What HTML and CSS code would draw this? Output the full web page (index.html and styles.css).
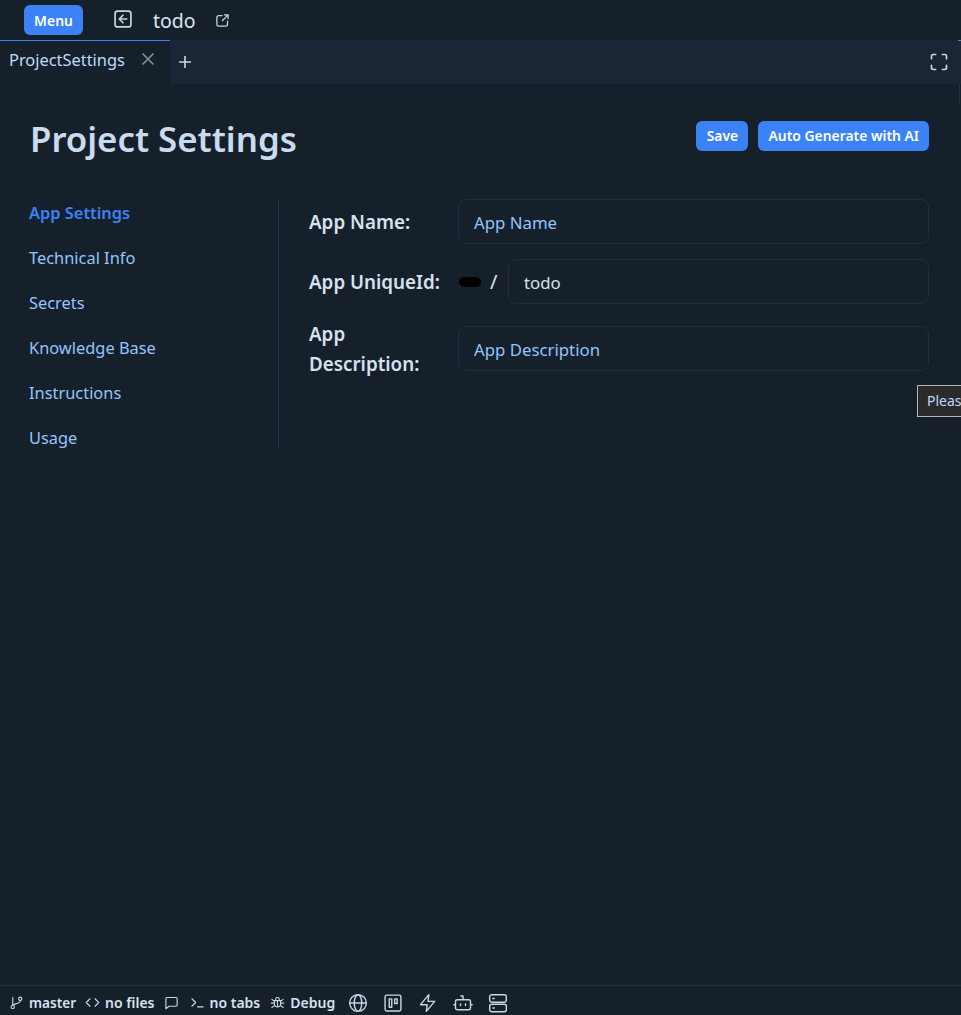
FILE: index.html
```html
<!DOCTYPE html>
<html lang="en">
<head>
    <meta charset="UTF-8">
    <meta name="viewport" content="width=device-width, initial-scale=1.0">
    <title>Project Settings</title>
    <link rel="stylesheet" href="styles.css">
</head>
<body>
    <div class="topbar">
        <button class="btn menu-btn">Menu</button>
        <svg class="icon back-icon" viewBox="0 0 24 24"><rect x="2.5" y="2.5" width="19" height="19" rx="3"/><path d="M12 7.5L7.5 12l4.5 4.5M8 12h8.5"/></svg>
        <span class="project-name">todo</span>
        <svg class="icon open-icon" viewBox="0 0 24 24"><path d="M11 4H6a3 3 0 0 0-3 3v11a3 3 0 0 0 3 3h11a3 3 0 0 0 3-3v-5M12 12l9-9M15 3h6v6"/></svg>
    </div>
    <div class="tabbar">
        <div class="tab">
            <span>ProjectSettings</span>
            <svg class="tab-close" viewBox="0 0 14 14"><path d="M1.5 1.5l11 11M12.5 1.5l-11 11"/></svg>
        </div>
        <svg class="tab-add" viewBox="0 0 14 14"><path d="M7 1v12M1 7h12"/></svg>
        <svg class="icon fullscreen-icon" viewBox="0 0 24 24"><path d="M3 8V5a2 2 0 0 1 2-2h3M16 3h3a2 2 0 0 1 2 2v3M21 16v3a2 2 0 0 1-2 2h-3M8 21H5a2 2 0 0 1-2-2v-3"/></svg>
    </div>
    <main class="content">
        <div class="page-head">
            <h1>Project Settings</h1>
            <div class="actions">
                <button class="btn save-btn">Save</button>
                <button class="btn">Auto Generate with AI</button>
            </div>
        </div>
        <div class="settings">
            <nav class="side-nav">
                <a class="active">App Settings</a>
                <a>Technical Info</a>
                <a>Secrets</a>
                <a>Knowledge Base</a>
                <a>Instructions</a>
                <a>Usage</a>
            </nav>
            <div class="form">
                <div class="form-row">
                    <label>App Name:</label>
                    <input class="field" type="text" placeholder="App Name">
                </div>
                <div class="form-row">
                    <label>App UniqueId:</label>
                    <span class="redacted"></span>
                    <span class="slash">/</span>
                    <input class="field" type="text" value="todo">
                </div>
                <div class="form-row">
                    <label>App Description:</label>
                    <input class="field" type="text" placeholder="App Description">
                </div>
            </div>
        </div>
        <div class="tooltip">Pleas</div>
    </main>
    <div class="statusbar">
        <svg class="icon" viewBox="0 0 24 24"><circle cx="6" cy="19" r="2.6"/><circle cx="18" cy="6" r="2.6"/><path d="M6 16V4M18 9c0 5-8 4-12 7"/></svg>
        <span class="status-text branch">master</span>
        <svg class="icon" viewBox="0 0 24 24"><path d="M8 6l-6 6 6 6M16 6l6 6-6 6"/></svg>
        <span class="status-text">no files</span>
        <svg class="icon chat-icon" viewBox="0 0 24 24"><path d="M3 6a2 2 0 0 1 2-2h14a2 2 0 0 1 2 2v10a2 2 0 0 1-2 2H8l-5 4z"/></svg>
        <svg class="icon" viewBox="0 0 24 24"><path d="M3 6l6 6-6 6M12 19h9"/></svg>
        <span class="status-text tabs-count">no tabs</span>
        <svg class="icon" viewBox="0 0 24 24"><path d="M9 7a3 3 0 0 1 6 0M8 9h8a1 1 0 0 1 1 1v4a5 5 0 0 1-10 0v-4a1 1 0 0 1 1-1zM12 9v10M3 7l4 3M21 7l-4 3M2 13h5M22 13h-5M3 20l4-3M21 20l-4-3"/></svg>
        <span class="status-text debug">Debug</span>
        <svg class="icon wide-icon" viewBox="0 0 24 24"><circle cx="12" cy="12" r="10"/><ellipse cx="12" cy="12" rx="4.5" ry="10"/><path d="M2 12h20"/></svg>
        <svg class="icon wide-icon" viewBox="0 0 24 24"><rect x="2.5" y="2.5" width="19" height="19" rx="2"/><path d="M7.5 7h3v10h-3zM14 7h3v5.5h-3z"/></svg>
        <svg class="icon wide-icon" viewBox="0 0 24 24"><path d="M13 2L3 14h8l-1 8 10-12h-8z"/></svg>
        <svg class="icon wide-icon" viewBox="0 0 24 24"><path d="M12 8V3.5M9.5 3.5H12M5 8h14a2 2 0 0 1 2 2v8a2 2 0 0 1-2 2H5a2 2 0 0 1-2-2v-8a2 2 0 0 1 2-2zM1 14h2M21 14h2M9 13v2M15 13v2"/></svg>
        <svg class="icon wide-icon" viewBox="0 0 24 24"><rect x="2" y="2" width="20" height="9" rx="2.5"/><rect x="2" y="13.5" width="20" height="9" rx="2.5"/><path d="M6 6.5h1.5M6 18h1.5"/></svg>
    </div>
</body>
</html>
```

FILE: styles.css
```css
* {
    box-sizing: border-box;
}
html, body {
    height: 100%;
}
body {
    margin: 0;
    display: flex;
    flex-direction: column;
    background: #16202a;
    color: #cbd5e1;
    font-family: "Noto Sans", "Open Sans", sans-serif;
    overflow: hidden;
}
.icon {
    fill: none;
    stroke: #cbd5e1;
    stroke-width: 2;
    stroke-linecap: round;
    stroke-linejoin: round;
    flex: none;
}
.btn {
    height: 30px;
    padding: 0 10px;
    border: none;
    border-radius: 6px;
    background: #3b82f6;
    color: #fff;
    font-family: inherit;
    font-size: 13.9px;
    font-weight: 600;
}
.save-btn {
    width: 52px;
}

/* top bar */
.topbar {
    height: 40px;
    padding: 5px 0 5px 24px;
    display: flex;
    align-items: center;
    flex: none;
}
.menu-btn {
    width: 59px;
}
.back-icon {
    width: 20px;
    height: 20px;
    margin: -2px 0 0 30px;
}
.project-name {
    margin-left: 20px;
    font-size: 19.5px;
    color: #dbe6f3;
}
.open-icon {
    width: 15px;
    height: 15px;
    margin-left: 19px;
}

/* tabs */
.tabbar {
    height: 44px;
    flex: none;
    display: flex;
    align-items: center;
    position: relative;
    background: #1a2636;
    padding-right: 12px;
}
.tabbar::after {
    content: "";
    position: absolute;
    right: 0;
    top: 0;
    width: 3px;
    height: 1px;
    background: #3b82f6;
}
.tab {
    width: 170px;
    height: 44px;
    padding: 0 15px 6px 9px;
    display: flex;
    align-items: center;
    justify-content: space-between;
    background: #16202a;
    border-top: 1px solid #3b82f6;
    color: #bfdbfe;
    font-size: 16.4px;
}
.tab-close {
    width: 14px;
    height: 14px;
    margin-top: -2px;
    fill: none;
    stroke: #8b9199;
    stroke-width: 1.6;
}
.tab-add {
    width: 14px;
    height: 14px;
    margin: -1px 0 0 8px;
    fill: none;
    stroke: #cbd5e1;
    stroke-width: 1.6;
}
.fullscreen-icon {
    width: 20px;
    height: 20px;
    margin: -1px 0 0 auto;
}

/* page */
.content {
    flex: 1;
    position: relative;
    padding: 0 32px 0 29px;
}
.content::after {
    content: "";
    position: absolute;
    right: 1px;
    top: 0;
    width: 1px;
    height: 21px;
    background: #263140;
}
.page-head {
    height: 103px;
    margin-bottom: 12px;
    display: flex;
    justify-content: space-between;
    align-items: center;
}
.page-head h1 {
    margin: 6px 0 0 1px;
    font-size: 34.8px;
    font-weight: 600;
    color: #cadbf0;
}
.actions {
    display: flex;
    gap: 10px;
}
.settings {
    display: flex;
}
.side-nav {
    width: 250px;
    height: 250px;
    border-right: 1px solid #2a3645;
    display: flex;
    flex-direction: column;
    gap: 17px;
    font-size: 16.4px;
    line-height: 28px;
    color: #93c5fd;
}
.side-nav a {
    flex: none;
}
.side-nav .active {
    color: #3b82f6;
    font-weight: 600;
}
.form {
    flex: 1;
    padding-left: 30px;
    display: flex;
    flex-direction: column;
    gap: 15px;
}
.form-row {
    display: flex;
    align-items: center;
}
.form-row label {
    width: 149px;
    flex: none;
    padding-right: 10px;
    margin-bottom: -1px;
    font-size: 18.8px;
    font-weight: 600;
    line-height: 30px;
    color: #d6e2f0;
}
.field {
    flex: 1;
    min-width: 0;
    height: 45px;
    padding: 2px 15px 0;
    background: #16202a;
    border: 1px solid #212d3c;
    border-radius: 8px;
    outline: none;
    color: #d6e2f0;
    font-family: inherit;
    font-size: 16.8px;
}
.field::placeholder {
    color: #93c5fd;
    opacity: 1;
}
.redacted {
    width: 22px;
    height: 10px;
    margin-left: 1px;
    background: #000;
    border-radius: 5px;
    flex: none;
}
.slash {
    width: 8px;
    margin: 0 10px 0 9px;
    font-size: 20px;
    color: #d6e2f0;
}
.tooltip {
    position: absolute;
    right: 0;
    top: 301px;
    width: 44px;
    height: 32px;
    padding-left: 9px;
    line-height: 30px;
    font-size: 14px;
    white-space: nowrap;
    overflow: hidden;
    background: #2b2b2b;
    border: 1px solid #b5b5b5;
    border-right: none;
    color: #bfdbfe;
}

/* status bar */
.statusbar {
    height: 30px;
    flex: none;
    padding: 4px 0 0 9px;
    display: flex;
    align-items: center;
    border-top: 1px solid #263140;
    font-size: 14px;
    font-weight: 600;
    color: #d6e2f0;
}
.statusbar .icon {
    width: 15px;
    height: 15px;
    stroke-width: 1.8;
}
.status-text {
    margin: 0 9px 0 5px;
}
.branch {
    font-size: 13.6px;
}
.tabs-count {
    margin-right: 10px;
}
.debug {
    margin-right: 13px;
}
.statusbar .chat-icon {
    margin-right: 11px;
}
.statusbar .wide-icon {
    width: 20px;
    height: 20px;
    margin-right: 15px;
    stroke-width: 1.7;
}
```
